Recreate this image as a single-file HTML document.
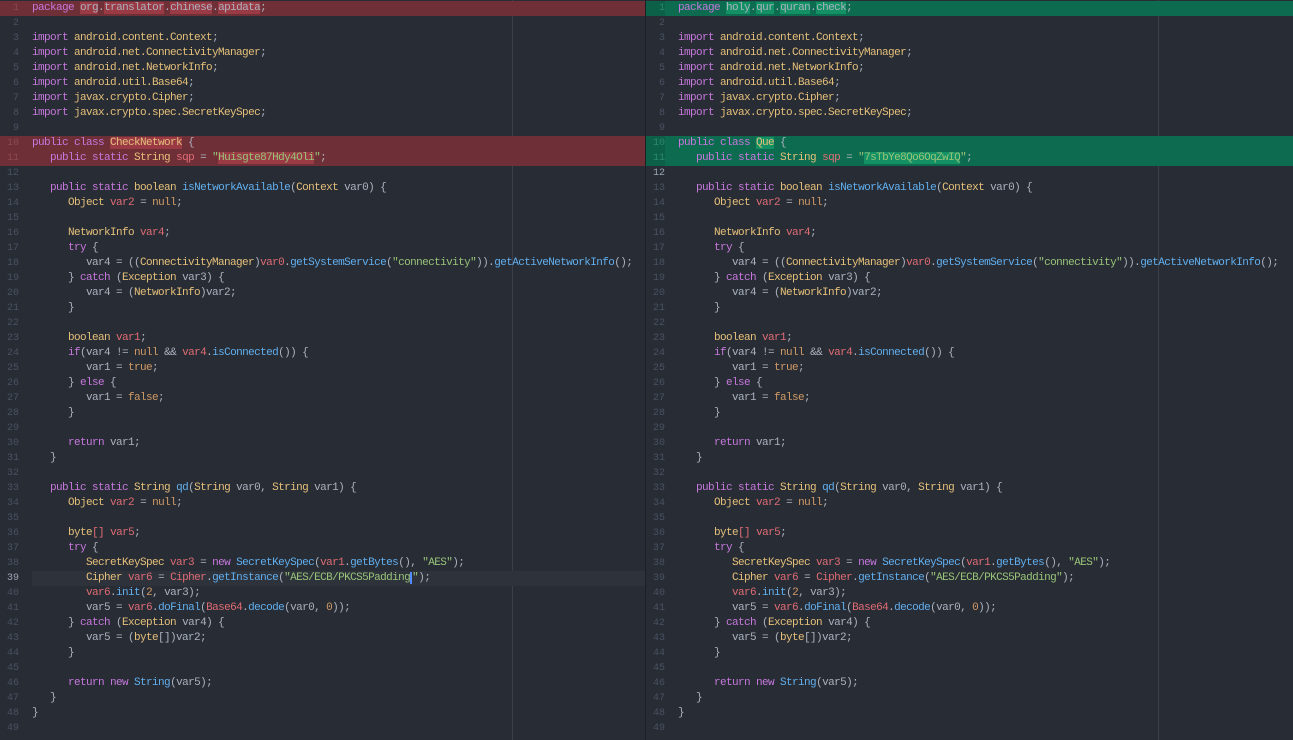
<!DOCTYPE html>
<html><head><meta charset="utf-8"><style>
html,body{margin:0;padding:0;width:1293px;height:740px;overflow:hidden;background:#282c34;}
.pane{position:absolute;top:0;height:740px;background:#282c34;overflow:hidden}
#L{left:0;width:645px}
#R{left:646px;width:647px}
#div{position:absolute;left:645px;top:0;width:1px;height:740px;background:#1d2026}
.guide{position:absolute;top:0;width:1px;height:740px;background:#3a3f4a}
.ln{position:absolute;left:0;height:15px;width:100%;font:11px/15px "Liberation Mono",monospace;letter-spacing:-0.6px;white-space:pre;color:#abb2bf}
.ln .no{position:absolute;left:0;width:19px;text-align:right;color:#495162;font-size:10px;letter-spacing:0}
.ln .c{position:absolute;left:32px}
.del{background:#6f2f37}
.del .no{background:#6f2f37;color:#8a4a52}
.add{background:#0d6b50}
.add .no{background:#0c6048;color:#2c8a6c}
.hd{background:#9a3a45}
.ha{background:#139165}
.cur{background:#2d323b}
.k{color:#c678dd}.t{color:#e5c07b}.v{color:#e06c75}.f{color:#61afef}.s{color:#98c379}.n{color:#d19a66}
</style></head><body>
<div id="L" class="pane">
<div class="guide" style="left:512px"></div>
<div class="ln del" style="top:1px"><span class="no">1</span><span class="c"><span class="k">package</span> <span class="hd">org</span>.<span class="hd">translator</span>.<span class="hd">chinese</span>.<span class="hd">apidata</span>;</span></div>
<div class="ln" style="top:16px"><span class="no">2</span></div>
<div class="ln" style="top:31px"><span class="no">3</span><span class="c"><span class="k">import</span> <span class="t">android.content.Context</span>;</span></div>
<div class="ln" style="top:46px"><span class="no">4</span><span class="c"><span class="k">import</span> <span class="t">android.net.ConnectivityManager</span>;</span></div>
<div class="ln" style="top:61px"><span class="no">5</span><span class="c"><span class="k">import</span> <span class="t">android.net.NetworkInfo</span>;</span></div>
<div class="ln" style="top:76px"><span class="no">6</span><span class="c"><span class="k">import</span> <span class="t">android.util.Base64</span>;</span></div>
<div class="ln" style="top:91px"><span class="no">7</span><span class="c"><span class="k">import</span> <span class="t">javax.crypto.Cipher</span>;</span></div>
<div class="ln" style="top:106px"><span class="no">8</span><span class="c"><span class="k">import</span> <span class="t">javax.crypto.spec.SecretKeySpec</span>;</span></div>
<div class="ln" style="top:121px"><span class="no">9</span></div>
<div class="ln del" style="top:136px"><span class="no">10</span><span class="c"><span class="k">public class</span> <span class="t hd">CheckNetwork</span> {</span></div>
<div class="ln del" style="top:151px"><span class="no">11</span><span class="c">   <span class="k">public static</span> <span class="t">String</span> <span class="v">sqp</span> = <span class="s">"<span class="hd">Huisgte87Hdy4Oli</span>"</span>;</span></div>
<div class="ln" style="top:166px"><span class="no">12</span></div>
<div class="ln" style="top:181px"><span class="no">13</span><span class="c">   <span class="k">public static</span> <span class="t">boolean</span> <span class="f">isNetworkAvailable</span>(<span class="t">Context</span> var0) {</span></div>
<div class="ln" style="top:196px"><span class="no">14</span><span class="c">      <span class="t">Object</span> <span class="v">var2</span> = <span class="n">null</span>;</span></div>
<div class="ln" style="top:211px"><span class="no">15</span></div>
<div class="ln" style="top:226px"><span class="no">16</span><span class="c">      <span class="t">NetworkInfo</span> <span class="v">var4</span>;</span></div>
<div class="ln" style="top:241px"><span class="no">17</span><span class="c">      <span class="k">try</span> {</span></div>
<div class="ln" style="top:256px"><span class="no">18</span><span class="c">         var4 = ((<span class="t">ConnectivityManager</span>)<span class="v">var0</span>.<span class="f">getSystemService</span>(<span class="s">"connectivity"</span>)).<span class="f">getActiveNetworkInfo</span>();</span></div>
<div class="ln" style="top:271px"><span class="no">19</span><span class="c">      } <span class="k">catch</span> (<span class="t">Exception</span> var3) {</span></div>
<div class="ln" style="top:286px"><span class="no">20</span><span class="c">         var4 = (<span class="t">NetworkInfo</span>)var2;</span></div>
<div class="ln" style="top:301px"><span class="no">21</span><span class="c">      }</span></div>
<div class="ln" style="top:316px"><span class="no">22</span></div>
<div class="ln" style="top:331px"><span class="no">23</span><span class="c">      <span class="t">boolean</span> <span class="v">var1</span>;</span></div>
<div class="ln" style="top:346px"><span class="no">24</span><span class="c">      <span class="k">if</span>(var4 != <span class="n">null</span> &amp;&amp; <span class="v">var4</span>.<span class="f">isConnected</span>()) {</span></div>
<div class="ln" style="top:361px"><span class="no">25</span><span class="c">         var1 = <span class="n">true</span>;</span></div>
<div class="ln" style="top:376px"><span class="no">26</span><span class="c">      } <span class="k">else</span> {</span></div>
<div class="ln" style="top:391px"><span class="no">27</span><span class="c">         var1 = <span class="n">false</span>;</span></div>
<div class="ln" style="top:406px"><span class="no">28</span><span class="c">      }</span></div>
<div class="ln" style="top:421px"><span class="no">29</span></div>
<div class="ln" style="top:436px"><span class="no">30</span><span class="c">      <span class="k">return</span> var1;</span></div>
<div class="ln" style="top:451px"><span class="no">31</span><span class="c">   }</span></div>
<div class="ln" style="top:466px"><span class="no">32</span></div>
<div class="ln" style="top:481px"><span class="no">33</span><span class="c">   <span class="k">public static</span> <span class="t">String</span> <span class="f">qd</span>(<span class="t">String</span> var0, <span class="t">String</span> var1) {</span></div>
<div class="ln" style="top:496px"><span class="no">34</span><span class="c">      <span class="t">Object</span> <span class="v">var2</span> = <span class="n">null</span>;</span></div>
<div class="ln" style="top:511px"><span class="no">35</span></div>
<div class="ln" style="top:526px"><span class="no">36</span><span class="c">      <span class="t">byte</span><span class="v">[]</span> <span class="v">var5</span>;</span></div>
<div class="ln" style="top:541px"><span class="no">37</span><span class="c">      <span class="k">try</span> {</span></div>
<div class="ln" style="top:556px"><span class="no">38</span><span class="c">         <span class="t">SecretKeySpec</span> <span class="v">var3</span> = <span class="k">new</span> <span class="f">SecretKeySpec</span>(<span class="v">var1</span>.<span class="f">getBytes</span>(), <span class="s">"AES"</span>);</span></div>
<div class="ln" style="top:571px"><span class="no" style="color:#9da5b4">39</span><span class="c cur" style="width:613px">         <span class="t">Cipher</span> <span class="v">var6</span> = <span class="v">Cipher</span>.<span class="f">getInstance</span>(<span class="s">"AES/ECB/PKCS5Padding</span><span style="border-left:2px solid #528bff"></span><span class="s">"</span>);</span></div>
<div class="ln" style="top:586px"><span class="no">40</span><span class="c">         <span class="v">var6</span>.<span class="f">init</span>(<span class="n">2</span>, var3);</span></div>
<div class="ln" style="top:601px"><span class="no">41</span><span class="c">         var5 = <span class="v">var6</span>.<span class="f">doFinal</span>(<span class="v">Base64</span>.<span class="f">decode</span>(var0, <span class="n">0</span>));</span></div>
<div class="ln" style="top:616px"><span class="no">42</span><span class="c">      } <span class="k">catch</span> (<span class="t">Exception</span> var4) {</span></div>
<div class="ln" style="top:631px"><span class="no">43</span><span class="c">         var5 = (<span class="t">byte</span>[])var2;</span></div>
<div class="ln" style="top:646px"><span class="no">44</span><span class="c">      }</span></div>
<div class="ln" style="top:661px"><span class="no">45</span></div>
<div class="ln" style="top:676px"><span class="no">46</span><span class="c">      <span class="k">return new</span> <span class="f">String</span>(var5);</span></div>
<div class="ln" style="top:691px"><span class="no">47</span><span class="c">   }</span></div>
<div class="ln" style="top:706px"><span class="no">48</span><span class="c">}</span></div>
<div class="ln" style="top:721px"><span class="no">49</span></div>
</div>
<div id="div"></div>
<div id="R" class="pane">
<div class="guide" style="left:512px"></div>
<div class="ln add" style="top:1px"><span class="no">1</span><span class="c"><span class="k">package</span> <span class="ha">holy</span>.<span class="ha">qur</span>.<span class="ha">quran</span>.<span class="ha">check</span>;</span></div>
<div class="ln" style="top:16px"><span class="no">2</span></div>
<div class="ln" style="top:31px"><span class="no">3</span><span class="c"><span class="k">import</span> <span class="t">android.content.Context</span>;</span></div>
<div class="ln" style="top:46px"><span class="no">4</span><span class="c"><span class="k">import</span> <span class="t">android.net.ConnectivityManager</span>;</span></div>
<div class="ln" style="top:61px"><span class="no">5</span><span class="c"><span class="k">import</span> <span class="t">android.net.NetworkInfo</span>;</span></div>
<div class="ln" style="top:76px"><span class="no">6</span><span class="c"><span class="k">import</span> <span class="t">android.util.Base64</span>;</span></div>
<div class="ln" style="top:91px"><span class="no">7</span><span class="c"><span class="k">import</span> <span class="t">javax.crypto.Cipher</span>;</span></div>
<div class="ln" style="top:106px"><span class="no">8</span><span class="c"><span class="k">import</span> <span class="t">javax.crypto.spec.SecretKeySpec</span>;</span></div>
<div class="ln" style="top:121px"><span class="no">9</span></div>
<div class="ln add" style="top:136px"><span class="no">10</span><span class="c"><span class="k">public class</span> <span class="t ha">Que</span> {</span></div>
<div class="ln add" style="top:151px"><span class="no">11</span><span class="c">   <span class="k">public static</span> <span class="t">String</span> <span class="v">sqp</span> = <span class="s">"<span class="ha">7sTbYe8Qo6OqZwIQ</span>"</span>;</span></div>
<div class="ln" style="top:166px"><span class="no" style="color:#9da5b4">12</span></div>
<div class="ln" style="top:181px"><span class="no">13</span><span class="c">   <span class="k">public static</span> <span class="t">boolean</span> <span class="f">isNetworkAvailable</span>(<span class="t">Context</span> var0) {</span></div>
<div class="ln" style="top:196px"><span class="no">14</span><span class="c">      <span class="t">Object</span> <span class="v">var2</span> = <span class="n">null</span>;</span></div>
<div class="ln" style="top:211px"><span class="no">15</span></div>
<div class="ln" style="top:226px"><span class="no">16</span><span class="c">      <span class="t">NetworkInfo</span> <span class="v">var4</span>;</span></div>
<div class="ln" style="top:241px"><span class="no">17</span><span class="c">      <span class="k">try</span> {</span></div>
<div class="ln" style="top:256px"><span class="no">18</span><span class="c">         var4 = ((<span class="t">ConnectivityManager</span>)<span class="v">var0</span>.<span class="f">getSystemService</span>(<span class="s">"connectivity"</span>)).<span class="f">getActiveNetworkInfo</span>();</span></div>
<div class="ln" style="top:271px"><span class="no">19</span><span class="c">      } <span class="k">catch</span> (<span class="t">Exception</span> var3) {</span></div>
<div class="ln" style="top:286px"><span class="no">20</span><span class="c">         var4 = (<span class="t">NetworkInfo</span>)var2;</span></div>
<div class="ln" style="top:301px"><span class="no">21</span><span class="c">      }</span></div>
<div class="ln" style="top:316px"><span class="no">22</span></div>
<div class="ln" style="top:331px"><span class="no">23</span><span class="c">      <span class="t">boolean</span> <span class="v">var1</span>;</span></div>
<div class="ln" style="top:346px"><span class="no">24</span><span class="c">      <span class="k">if</span>(var4 != <span class="n">null</span> &amp;&amp; <span class="v">var4</span>.<span class="f">isConnected</span>()) {</span></div>
<div class="ln" style="top:361px"><span class="no">25</span><span class="c">         var1 = <span class="n">true</span>;</span></div>
<div class="ln" style="top:376px"><span class="no">26</span><span class="c">      } <span class="k">else</span> {</span></div>
<div class="ln" style="top:391px"><span class="no">27</span><span class="c">         var1 = <span class="n">false</span>;</span></div>
<div class="ln" style="top:406px"><span class="no">28</span><span class="c">      }</span></div>
<div class="ln" style="top:421px"><span class="no">29</span></div>
<div class="ln" style="top:436px"><span class="no">30</span><span class="c">      <span class="k">return</span> var1;</span></div>
<div class="ln" style="top:451px"><span class="no">31</span><span class="c">   }</span></div>
<div class="ln" style="top:466px"><span class="no">32</span></div>
<div class="ln" style="top:481px"><span class="no">33</span><span class="c">   <span class="k">public static</span> <span class="t">String</span> <span class="f">qd</span>(<span class="t">String</span> var0, <span class="t">String</span> var1) {</span></div>
<div class="ln" style="top:496px"><span class="no">34</span><span class="c">      <span class="t">Object</span> <span class="v">var2</span> = <span class="n">null</span>;</span></div>
<div class="ln" style="top:511px"><span class="no">35</span></div>
<div class="ln" style="top:526px"><span class="no">36</span><span class="c">      <span class="t">byte</span><span class="v">[]</span> <span class="v">var5</span>;</span></div>
<div class="ln" style="top:541px"><span class="no">37</span><span class="c">      <span class="k">try</span> {</span></div>
<div class="ln" style="top:556px"><span class="no">38</span><span class="c">         <span class="t">SecretKeySpec</span> <span class="v">var3</span> = <span class="k">new</span> <span class="f">SecretKeySpec</span>(<span class="v">var1</span>.<span class="f">getBytes</span>(), <span class="s">"AES"</span>);</span></div>
<div class="ln" style="top:571px"><span class="no">39</span><span class="c">         <span class="t">Cipher</span> <span class="v">var6</span> = <span class="v">Cipher</span>.<span class="f">getInstance</span>(<span class="s">"AES/ECB/PKCS5Padding"</span>);</span></div>
<div class="ln" style="top:586px"><span class="no">40</span><span class="c">         <span class="v">var6</span>.<span class="f">init</span>(<span class="n">2</span>, var3);</span></div>
<div class="ln" style="top:601px"><span class="no">41</span><span class="c">         var5 = <span class="v">var6</span>.<span class="f">doFinal</span>(<span class="v">Base64</span>.<span class="f">decode</span>(var0, <span class="n">0</span>));</span></div>
<div class="ln" style="top:616px"><span class="no">42</span><span class="c">      } <span class="k">catch</span> (<span class="t">Exception</span> var4) {</span></div>
<div class="ln" style="top:631px"><span class="no">43</span><span class="c">         var5 = (<span class="t">byte</span>[])var2;</span></div>
<div class="ln" style="top:646px"><span class="no">44</span><span class="c">      }</span></div>
<div class="ln" style="top:661px"><span class="no">45</span></div>
<div class="ln" style="top:676px"><span class="no">46</span><span class="c">      <span class="k">return new</span> <span class="f">String</span>(var5);</span></div>
<div class="ln" style="top:691px"><span class="no">47</span><span class="c">   }</span></div>
<div class="ln" style="top:706px"><span class="no">48</span><span class="c">}</span></div>
<div class="ln" style="top:721px"><span class="no">49</span></div>
</div>
</body></html>
